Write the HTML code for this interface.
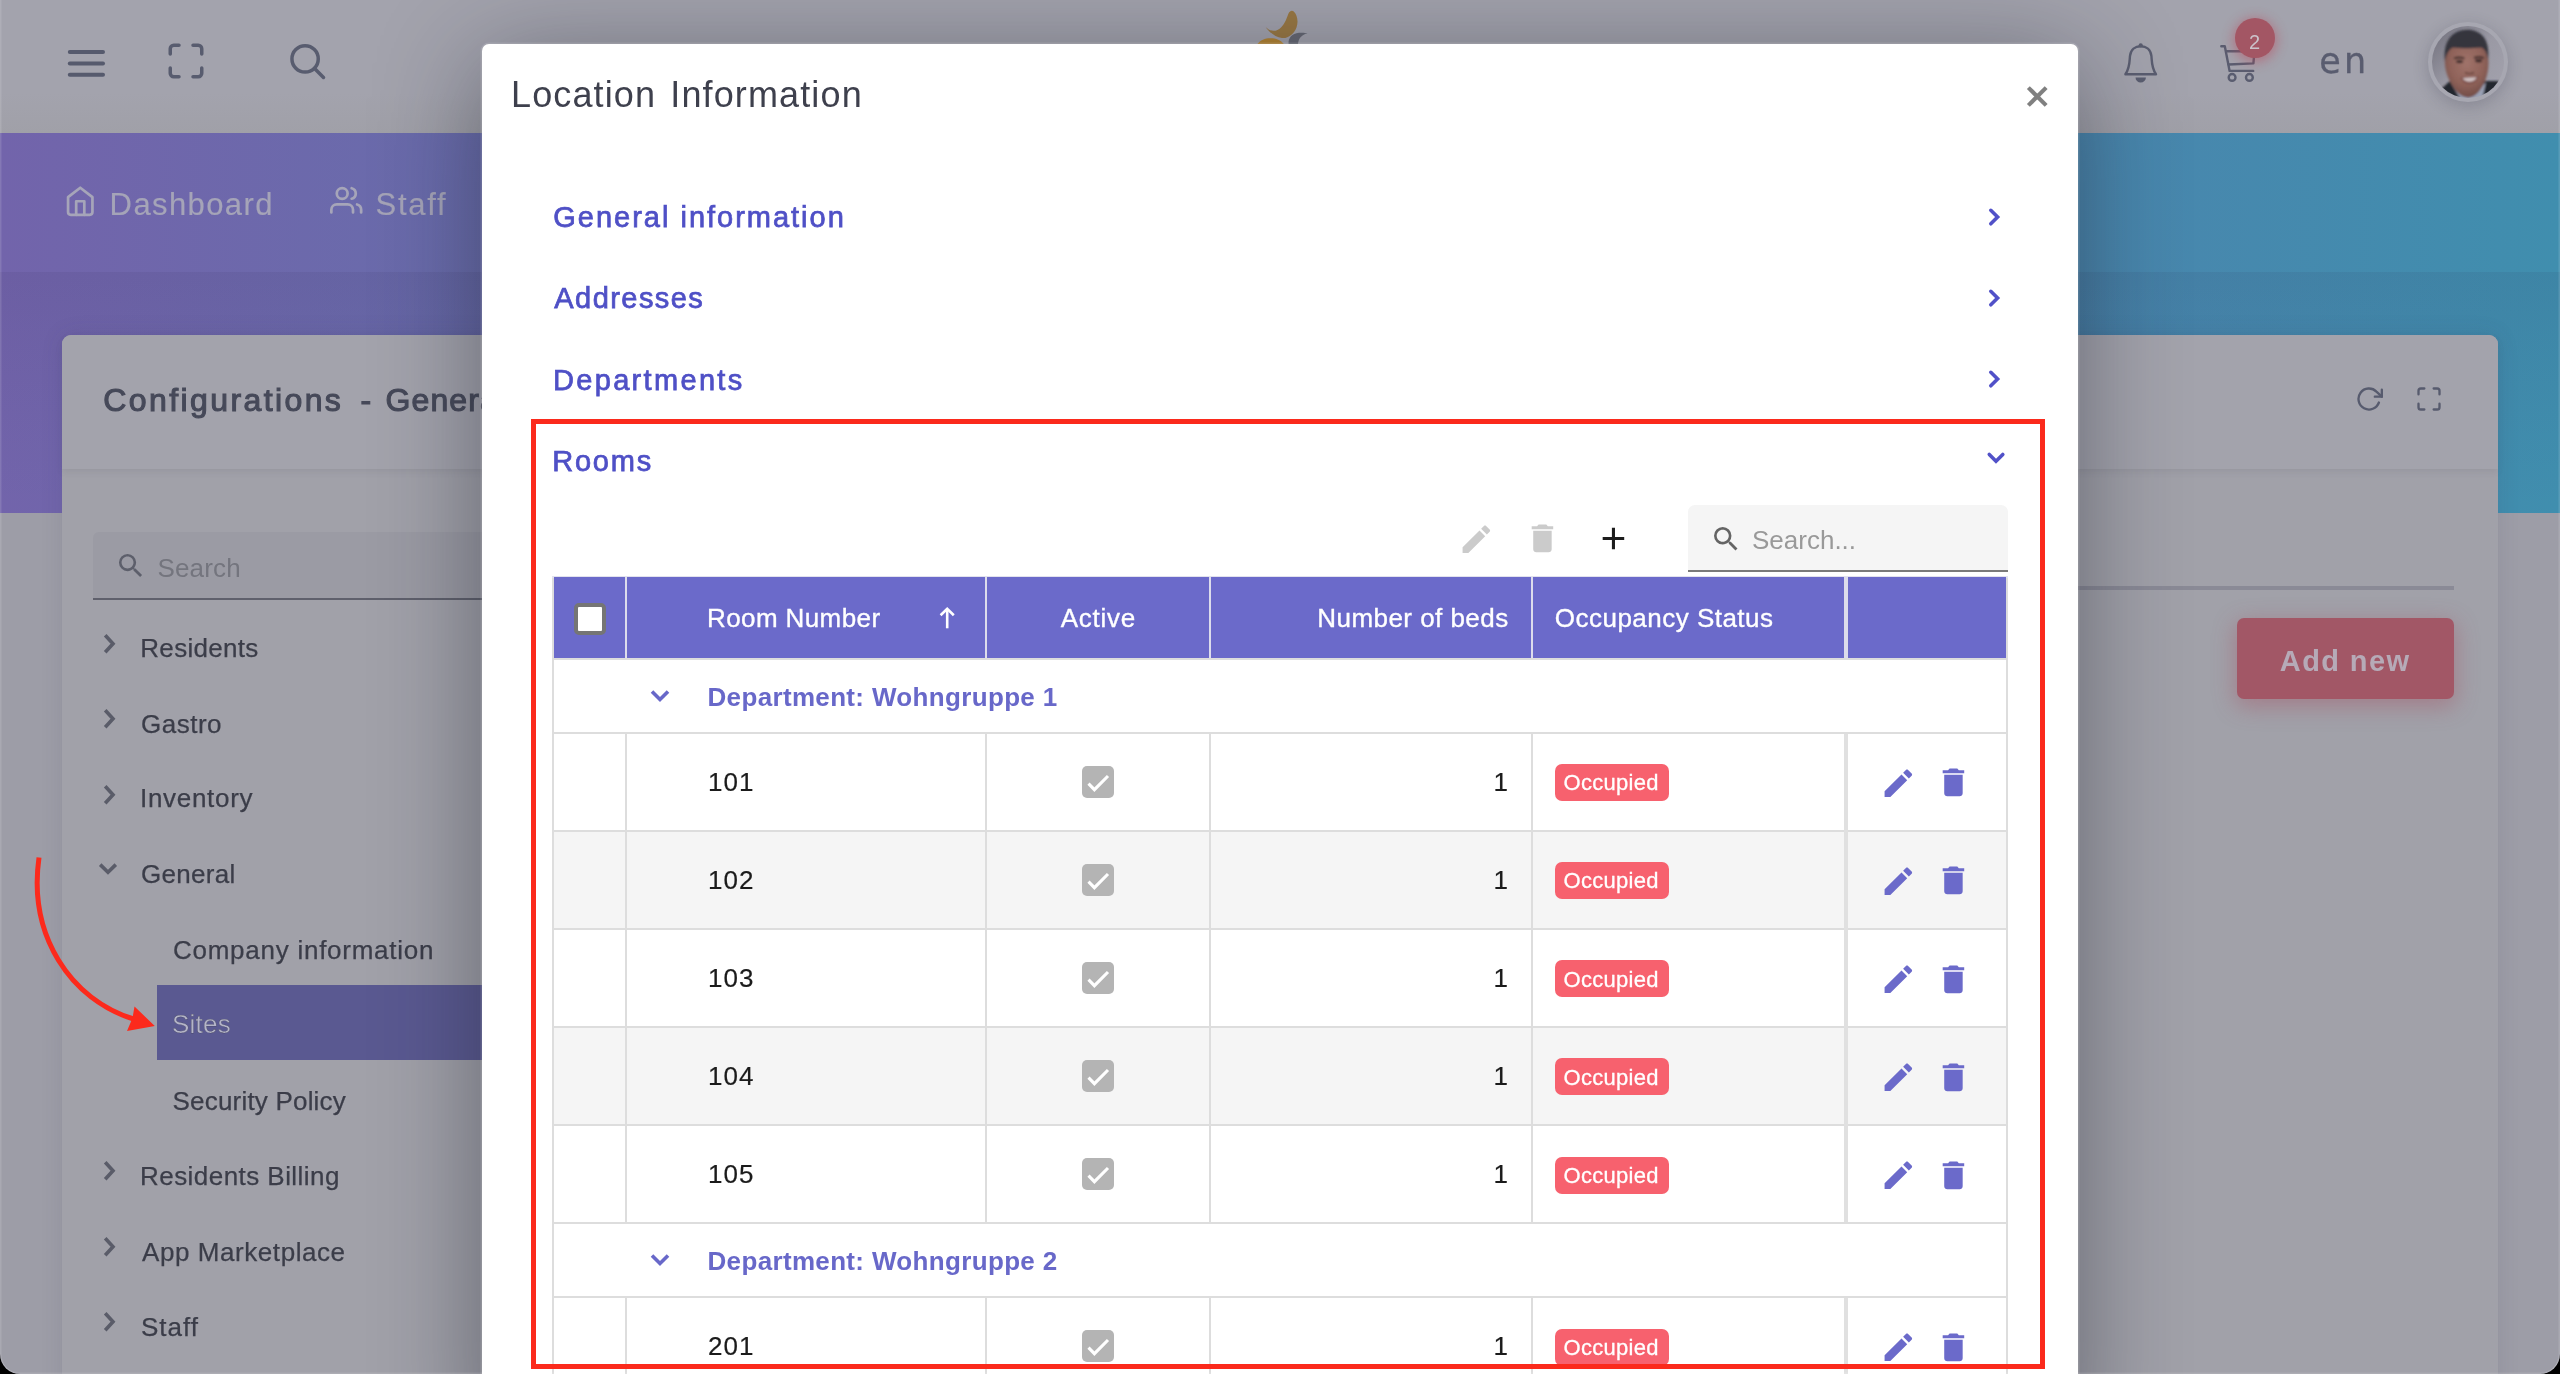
<!DOCTYPE html>
<html lang="en">
<head>
<meta charset="utf-8">
<title>Location Information</title>
<style>
*{box-sizing:border-box;margin:0;padding:0}
html,body{width:2560px;height:1374px;overflow:hidden;background:#000}
body{position:relative;font-family:"Liberation Sans",sans-serif;color:#3a3c48}
.abs{position:absolute}
.t{position:absolute;white-space:nowrap;line-height:1}
#page{will-change:transform;position:absolute;left:0;top:0;width:2560px;height:1374px;background:#9d9da7;overflow:hidden;border-radius:0 0 20px 20px}
/* header */
#hdr{left:0;top:0;width:2560px;height:133px;background:linear-gradient(#a3a3ad 0,#a3a3ad 70%,#a0a0a8 100%)}
#nav{left:0;top:133px;width:2560px;height:139px;background:linear-gradient(90deg,#7264ab 0%,#408eae 100%)}
#band{left:0;top:272px;width:2560px;height:240.800px;background:linear-gradient(180deg,rgba(30,20,60,.075) 0,rgba(30,20,60,.05) 25%,rgba(30,20,60,.015) 70%,rgba(30,20,60,0) 100%),linear-gradient(90deg,#7264ab 0%,#408eae 100%)}
#card{left:62px;top:335px;width:2436px;height:1100px;background:#a1a1a9;border-radius:9px;box-shadow:0 0 22px rgba(60,60,80,.12)}
#cardh{left:0;top:0;width:2436px;height:134px;background:#a3a3ac;border-radius:9px 9px 0 0;box-shadow:0 3px 6px rgba(70,70,90,.10)}
.navt{font-size:31px;color:#a5a4b8;letter-spacing:.6px;-webkit-text-stroke:.15px #a5a4b8}
.tree{font-size:26px;color:#3b3d49;-webkit-text-stroke:.25px #3b3d49}
/* modal */
#modal{left:482px;top:44px;width:1596px;height:1400px;background:#fff;border-radius:7px;box-shadow:0 0 0 1.5px rgba(255,255,255,.13),0 18px 105px 0 rgba(28,31,44,.47)}
.acc{font-size:29px;color:#4f50c6;-webkit-text-stroke:.75px #4f50c6}
#red{left:531.200px;top:419.300px;width:1513.700px;height:949.600px;border:5px solid #fb2a1c}
.cell{font-size:26px;color:#1b1b1b;letter-spacing:1px;-webkit-text-stroke:.2px #1b1b1b}
.badge{position:absolute;left:1555px;width:113.500px;height:37px;border-radius:7px;background:#f7616e}
.badge span{position:absolute;left:8.5px;top:8.2px;font-size:22px;letter-spacing:.3px;line-height:1;color:#fff;white-space:nowrap;-webkit-text-stroke:.3px #fff}
.chk{position:absolute;left:1082px;width:32px;height:32px;border-radius:5px;background:#b4b4b4}
</style>
</head>
<body>
<div id="page">
<div id="hdr" class="abs"></div>
<div id="nav" class="abs"></div>
<div id="band" class="abs"></div>
<div id="card" class="abs"><div id="cardh" class="abs"></div></div>

<!-- header icons -->
<svg class="abs" style="left:60px;top:40px" width="60" height="50" viewBox="0 0 60 50"><g stroke="#565a6d" stroke-width="4" stroke-linecap="round"><line x1="9.8" y1="12.1" x2="43" y2="12.1"/><line x1="9.8" y1="23.4" x2="43" y2="23.4"/><line x1="9.8" y1="34.7" x2="43" y2="34.7"/></g></svg>
<svg class="abs" style="left:164.6px;top:40.4px" width="42" height="42" viewBox="0 0 24 24" fill="none" stroke="#585c6f" stroke-width="2" stroke-linecap="round" stroke-linejoin="round"><path d="M8 3H5a2 2 0 0 0-2 2v3m18 0V5a2 2 0 0 0-2-2h-3m0 18h3a2 2 0 0 0 2-2v-3M3 16v3a2 2 0 0 0 2 2h3"/></svg>
<svg class="abs" style="left:280px;top:34px" width="56" height="56" viewBox="0 0 56 56" fill="none" stroke="#585c6f" stroke-width="3.5" stroke-linecap="round"><circle cx="25.1" cy="24.9" r="13.15"/><line x1="34.6" y1="34.4" x2="43.5" y2="43.4"/></svg>
<!-- nav -->
<svg class="abs" style="left:64px;top:184.6px" width="32.5" height="32.5" viewBox="0 0 24 24" fill="none" stroke="#a6a5b9" stroke-width="2" stroke-linecap="round" stroke-linejoin="round"><path d="M3 9l9-7 9 7v11a2 2 0 0 1-2 2H5a2 2 0 0 1-2-2z"/><polyline points="9 22 9 12 15 12 15 22"/></svg>
<span class="t navt" id="t_dash" style="left:109.6px;top:189px;letter-spacing:1.4px">Dashboard</span>
<svg class="abs" style="left:330px;top:184.4px" width="32.5" height="32.5" viewBox="0 0 24 24" fill="none" stroke="#a6a5b9" stroke-width="2" stroke-linecap="round" stroke-linejoin="round"><path d="M17 21v-2a4 4 0 0 0-4-4H5a4 4 0 0 0-4 4v2"/><circle cx="9" cy="7" r="4"/><path d="M23 21v-2a4 4 0 0 0-3-3.87"/><path d="M16 3.130a4 4 0 0 1 0 7.750"/></svg>
<span class="t navt" id="t_staffnav" style="left:375.6px;top:189px;letter-spacing:1.7px">Staff</span>
<!-- card title -->
<span class="t" id="t_conf1" style="left:103.3px;top:383.8px;font-size:32px;color:#464959;-webkit-text-stroke:1.1px #464959;letter-spacing:2.4px">Configurations</span><span class="t" id="t_conf2" style="left:360.5px;top:383.8px;font-size:32px;color:#464959;-webkit-text-stroke:1.1px #464959">-</span><span class="t" id="t_conf3" style="left:385.5px;top:383.8px;font-size:32px;color:#464959;-webkit-text-stroke:1.1px #464959;letter-spacing:1.1px">General</span>
<!-- sidebar search -->
<div class="abs" style="left:93px;top:532px;width:600px;height:67.500px;background:#9b9ba4;border-bottom:2.5px solid #5f606c;border-radius:6px 0 0 0"></div>
<svg class="abs" style="left:114.800px;top:549.800px" width="31.700" height="31.700" viewBox="0 0 24 24"><path fill="#5d5f6b" d="M15.5 14h-.79l-.28-.27A6.471 6.471 0 0 0 16 9.500 6.500 6.500 0 1 0 9.500 16c1.610 0 3.090-.59 4.230-1.570l.27.280v.79l5 4.990L20.490 19l-4.990-5zm-6 0C7.010 14 5 11.990 5 9.500S7.010 5 9.500 5 14 7.010 14 9.500 11.990 14 9.500 14z"/></svg>
<span class="t" id="t_srch" style="left:157.5px;top:554.5px;font-size:26px;color:#74757e;letter-spacing:0.15px">Search</span>
<svg class="abs" style="left:98px;top:629.7px" width="28" height="28" viewBox="0 0 28 28" fill="none" stroke="#5a5c69" stroke-width="3.6"><polyline points="7.200,5.300 15,13.800 7.200,22.300"/></svg>
<span class="t tree" id="t_tree0" style="left:140.3px;top:634.5px;letter-spacing:0.3px">Residents</span>
<svg class="abs" style="left:98px;top:705.2px" width="28" height="28" viewBox="0 0 28 28" fill="none" stroke="#5a5c69" stroke-width="3.6"><polyline points="7.200,5.300 15,13.800 7.200,22.300"/></svg>
<span class="t tree" id="t_tree1" style="left:141px;top:710.5px;letter-spacing:0.5px">Gastro</span>
<svg class="abs" style="left:98px;top:780.7px" width="28" height="28" viewBox="0 0 28 28" fill="none" stroke="#5a5c69" stroke-width="3.6"><polyline points="7.200,5.300 15,13.800 7.200,22.300"/></svg>
<span class="t tree" id="t_tree2" style="left:140px;top:785px;letter-spacing:0.7px">Inventory</span>
<svg class="abs" style="left:94px;top:856.2px" width="28" height="28" viewBox="0 0 28 28" fill="none" stroke="#5a5c69" stroke-width="3.6"><polyline points="6.2,8.600 14,16.200 21.800,8.600"/></svg>
<span class="t tree" id="t_tree3" style="left:141px;top:861px;letter-spacing:0.3px">General</span>
<svg class="abs" style="left:98px;top:1157.2px" width="28" height="28" viewBox="0 0 28 28" fill="none" stroke="#5a5c69" stroke-width="3.6"><polyline points="7.200,5.300 15,13.800 7.200,22.300"/></svg>
<span class="t tree" id="t_tree4" style="left:140px;top:1163px;letter-spacing:0.45px">Residents Billing</span>
<svg class="abs" style="left:98px;top:1232.7px" width="28" height="28" viewBox="0 0 28 28" fill="none" stroke="#5a5c69" stroke-width="3.6"><polyline points="7.200,5.300 15,13.800 7.200,22.300"/></svg>
<span class="t tree" id="t_tree5" style="left:142px;top:1238.5px;letter-spacing:0.57px">App Marketplace</span>
<svg class="abs" style="left:98px;top:1308.2px" width="28" height="28" viewBox="0 0 28 28" fill="none" stroke="#5a5c69" stroke-width="3.6"><polyline points="7.200,5.300 15,13.800 7.200,22.300"/></svg>
<span class="t tree" id="t_tree6" style="left:141px;top:1314px;letter-spacing:1px">Staff</span>
<span class="t tree" id="t_comp" style="left:173px;top:936.5px;letter-spacing:0.74px">Company information</span>
<div class="abs" style="left:157px;top:984.5px;width:400px;height:75px;background:#5a5991"></div>
<span class="t tree" id="t_sites" style="left:172px;top:1010.5px;color:#b4b4c9;letter-spacing:0.25px">Sites</span>
<span class="t tree" id="t_sec" style="left:172.5px;top:1088px;letter-spacing:0.2px">Security Policy</span>

<!-- right header -->
<svg class="abs" style="left:2120px;top:40px" width="44" height="46" viewBox="0 0 44 46"><path d="M5.4 34.2 C10.2 27.5 9.4 20.5 10 15.800 C10.800 9.6 15.2 6.3 20.7 6.3 C26.2 6.3 30.600 9.6 31.400 15.800 C32 20.5 31.200 27.5 36 34.2 Z" fill="none" stroke="#5a5d70" stroke-width="2.4" stroke-linejoin="round"/><circle cx="20.7" cy="5.3" r="2.1" fill="#5a5d70"/><path d="M15.5 37.4 A5.200 5.200 0 0 0 25.900 37.4 Z" fill="#5a5d70"/></svg>
<svg class="abs" style="left:2215px;top:40px" width="46" height="46" viewBox="0 0 46 46" fill="none" stroke="#5a5d70" stroke-width="2.4" stroke-linecap="round" stroke-linejoin="round"><path d="M6.3 6.2 L9.8 6.2 L14.6 30.900 L38.200 30.900"/><path d="M11.6 11.2 L39.5 11.2 L38.400 23.4 L13.6 24.500"/><circle cx="17.100" cy="37.4" r="3.4"/><circle cx="34.400" cy="37.4" r="3.4"/></svg>
<div class="abs" style="left:2234.8px;top:17.900px;width:40.400px;height:40.400px;border-radius:50%;background:#a35664;box-shadow:0 2px 12px 2px rgba(190,60,80,.45)"></div>
<span class="t" id="t_two" style="left:2249px;top:31.6px;font-size:20px;color:#cbc2ca">2</span>
<span class="t" id="t_en" style="left:2319.3px;top:43.7px;font-family:'DejaVu Sans','Liberation Sans',sans-serif;font-size:35px;color:#595c6f;letter-spacing:3.2px;-webkit-text-stroke:.3px #595c6f">en</span>
<!-- avatar -->
<div class="abs" style="left:2428.400px;top:22.200px;width:79.600px;height:79.600px;border-radius:50%;background:#a7a7b1;box-shadow:0 4px 16px rgba(40,40,60,.22)"></div>
<svg class="abs" style="left:2432px;top:26px" width="72" height="72" viewBox="0 0 72 72"><defs><clipPath id="avc"><circle cx="36" cy="36" r="36"/></clipPath><linearGradient id="avg" x1="0" y1="0" x2="1" y2="1"><stop offset="0" stop-color="#6f6e7a"/><stop offset=".5" stop-color="#9a99a4"/><stop offset="1" stop-color="#a4a3ae"/></linearGradient><radialGradient id="skin" cx=".5" cy=".38" r=".65"><stop offset="0" stop-color="#a0736a"/><stop offset=".6" stop-color="#8f6259"/><stop offset="1" stop-color="#6e4a45"/></radialGradient><filter id="avb" x="-10%" y="-10%" width="120%" height="120%"><feGaussianBlur stdDeviation="0.900"/></filter></defs><g clip-path="url(#avc)"><rect width="72" height="72" fill="url(#avg)"/><g filter="url(#avb)"><path d="M9 63 L18 55 L31 74 L4 74 Z" fill="#24262f"/><path d="M51 55 L67 55 L60 74 L44 74 Z" fill="#24262f"/><path d="M19 57 L29 74 L50 74 L54 56 L44 66 Z" fill="#9aa1b5"/><path d="M12.800 36 C12.500 26 18 16 35 16 C52 16 56.500 26 56.500 36 C56.500 46 54 56 48 64 C44 69.500 40 71.500 36 71.500 C31 71.500 26 68 22 62 C16 53 13 45 12.800 36 Z" fill="url(#skin)"/><path d="M13 35 C10.500 15 21 3.800 35 3.800 C49.500 3.800 58.500 14 56 34 C55 27 53 22.500 49 21.500 C40 22.500 28 22.500 21 21.500 C16.500 23.500 14.500 28 13 35 Z" fill="#34353e"/><path d="M22 32.500 Q27 30.500 32.500 32.500" stroke="#3d2c2c" stroke-width="1.800" fill="none"/><path d="M42 31.800 Q47 30 52 32.200" stroke="#3d2c2c" stroke-width="1.800" fill="none"/><ellipse cx="27.600" cy="35.600" rx="3.600" ry="1.700" fill="#3a2a2b"/><ellipse cx="46.600" cy="34.800" rx="3.600" ry="1.700" fill="#3a2a2b"/><path d="M33 46.500 Q37.500 49 42 46.500" stroke="#6c463f" stroke-width="1.600" fill="none"/><path d="M28.500 51.500 Q37.500 50.500 47 50 Q44 58 37 58 Q31 57.500 28.500 51.500 Z" fill="#7d4f4b"/><path d="M30.500 52.300 Q37.500 51.500 45 51.300 Q42 55.800 37.300 55.800 Q33 55.500 30.500 52.300 Z" fill="#cfc1c2"/></g></g></svg>
<!-- card right icons -->
<svg class="abs" style="left:2354.500px;top:384.500px" width="28" height="28" viewBox="0 0 24 24" fill="none" stroke="#575b6e" stroke-width="2" stroke-linecap="round" stroke-linejoin="round"><polyline points="23 4 23 10 17 10"/><path d="M20.490 15a9 9 0 1 1-2.120-9.360L23 10"/></svg>
<svg class="abs" style="left:2414.700px;top:384.700px" width="28" height="28" viewBox="0 0 24 24" fill="none" stroke="#575b6e" stroke-width="2" stroke-linecap="round" stroke-linejoin="round"><path d="M8 3H5a2 2 0 0 0-2 2v3m18 0V5a2 2 0 0 0-2-2h-3m0 18h3a2 2 0 0 0 2-2v-3M3 16v3a2 2 0 0 0 2 2h3"/></svg>
<div class="abs" style="left:700px;top:585.500px;width:1754px;height:4px;background:#8a8a96"></div>
<div class="abs" style="left:2237px;top:618px;width:217px;height:81px;border-radius:7px;background:#a25766;box-shadow:0 6px 22px 2px rgba(165,70,90,.38)"></div>
<span class="t" id="t_addnew" style="left:2279.8px;top:646.5px;font-size:29px;font-weight:bold;color:#b6aab7;letter-spacing:1.4px">Add new</span>

<svg class="abs" style="left:1250px;top:0" width="70" height="46" viewBox="0 0 70 46"><path d="M15.600 26.900 C20 31.500 26 32.500 31 27.500 C35.500 23 37 17 38.500 13.500 C39.800 10.700 42 10 43.800 11.500 C47.500 15 48.500 22 46.500 27.500 C44 34 38 38.800 32 38 C25 37 19 32 15.600 26.900 Z" fill="#9a7842"/><path d="M38.600 44 C38 38 42 33.500 49 32.800 C52.500 32.500 55.500 32.800 57.500 33.200 C52 34.500 48.500 38 48 44 Z" fill="#666873"/><path d="M7.500 44 C10 40 15 38.200 20.500 38.200 C26 38.200 31 40 33.800 44 Z" fill="#b5842f"/></svg>
<div id="modal" class="abs"></div>
<span class="t" id="t_title" style="left:511px;top:77px;font-size:36px;color:#3e404d;letter-spacing:1.13px;word-spacing:3px">Location Information</span>
<svg class="abs" style="left:2022px;top:81px" width="31" height="31" viewBox="0 0 31 31" stroke="#808080" stroke-width="4.100"><line x1="6.350" y1="6.600" x2="24.150" y2="24.400"/><line x1="24.150" y1="6.600" x2="6.350" y2="24.400"/></svg>
<span class="t acc" id="t_acc0" style="left:553.3px;top:203.2px;letter-spacing:1.99px">General information</span>
<span class="t acc" id="t_acc1" style="left:554.3px;top:284.4px;letter-spacing:1.44px">Addresses</span>
<span class="t acc" id="t_acc2" style="left:553px;top:365.5px;letter-spacing:2.32px">Departments</span>
<span class="t acc" id="t_acc3" style="left:552.3px;top:446.5px;letter-spacing:1.75px">Rooms</span>
<svg class="abs" style="left:1980px;top:202.5px" width="28" height="28" viewBox="0 0 28 28" fill="none" stroke="#5151c8" stroke-width="3.600" stroke-linecap="round"><polyline points="10.800,7.300 17.600,14 10.800,20.800"/></svg>
<svg class="abs" style="left:1980px;top:283.5px" width="28" height="28" viewBox="0 0 28 28" fill="none" stroke="#5151c8" stroke-width="3.600" stroke-linecap="round"><polyline points="10.800,7.300 17.600,14 10.800,20.800"/></svg>
<svg class="abs" style="left:1980px;top:364.5px" width="28" height="28" viewBox="0 0 28 28" fill="none" stroke="#5151c8" stroke-width="3.600" stroke-linecap="round"><polyline points="10.800,7.300 17.600,14 10.800,20.800"/></svg>
<svg class="abs" style="left:1981.500px;top:444px" width="28" height="28" viewBox="0 0 28 28" fill="none" stroke="#5151c8" stroke-width="3.600" stroke-linecap="round"><polyline points="7.300,10.400 14,17.200 20.800,10.400"/></svg>
<svg class="abs" style="left:1457.7px;top:520.7px" width="36.7" height="36.7" viewBox="0 0 24 24"><path fill="#cbcbcb" d="M3 17.25V21h3.75L17.810 9.940l-3.750-3.750L3 17.250zM20.710 7.040c.390-.390.390-1.020 0-1.410l-2.340-2.340c-.390-.390-1.020-.390-1.410 0l-1.830 1.830 3.750 3.750 1.830-1.830z"/></svg>
<svg class="abs" style="left:1523.5px;top:520.4px" width="36.9" height="36.9" viewBox="0 0 24 24"><path fill="#cbcbcb" d="M6 19c0 1.100.900 2 2 2h8c1.100 0 2-.900 2-2V7H6v12zM19 4h-3.500l-1-1h-5l-1 1H5v2h14V4z"/></svg>
<svg class="abs" style="left:1595.4px;top:520.4px" width="36.9" height="36.9" viewBox="0 0 24 24"><path fill="#1c1c1c" d="M19 13h-6v6h-2v-6H5v-2h6V5h2v6h6v2z"/></svg>
<div class="abs" style="left:1688px;top:505px;width:320px;height:66.500px;background:#f5f5f5;border-bottom:2.500px solid #7a7a7a;border-radius:7px 7px 0 0"></div>
<svg class="abs" style="left:1709.7px;top:522.9px" width="32.2" height="32.2" viewBox="0 0 24 24"><path fill="#646464" d="M15.500 14h-.790l-.280-.270A6.471 6.471 0 0 0 16 9.500 6.500 6.500 0 1 0 9.500 16c1.610 0 3.090-.590 4.230-1.570l.270.280v.790l5 4.990L20.490 19l-4.990-5zm-6 0C7.010 14 5 11.990 5 9.500S7.010 5 9.500 5 14 7.010 14 9.500 11.990 14 9.500 14z"/></svg>
<span class="t" id="t_srch2" style="left:1752px;top:526.5px;font-size:26px;color:#999">Search...</span>
<!--TBL-START-->
<div class="abs" style="left:552px;top:576px;width:2px;height:820px;background:#ddd"></div>
<div class="abs" style="left:2006px;top:576px;width:2px;height:820px;background:#ddd"></div>
<div class="abs" style="left:552px;top:576px;width:1456px;height:1.500px;background:#e2e2ee"></div>
<div class="abs" style="left:554px;top:577px;width:1452px;height:81.300px;background:#6b6aca"></div>
<div class="abs" style="left:554px;top:831.58px;width:1452px;height:96.08px;background:#f5f5f5"></div>
<div class="abs" style="left:554px;top:1027.74px;width:1452px;height:96.08px;background:#f5f5f5"></div>
<div class="abs" style="left:554px;top:658.3px;width:1452px;height:2px;background:#ddd"></div>
<div class="abs" style="left:554px;top:731.5px;width:1452px;height:2px;background:#ddd"></div>
<div class="abs" style="left:554px;top:829.58px;width:1452px;height:2px;background:#ddd"></div>
<div class="abs" style="left:554px;top:927.66px;width:1452px;height:2px;background:#ddd"></div>
<div class="abs" style="left:554px;top:1025.74px;width:1452px;height:2px;background:#ddd"></div>
<div class="abs" style="left:554px;top:1123.82px;width:1452px;height:2px;background:#ddd"></div>
<div class="abs" style="left:554px;top:1221.9px;width:1452px;height:2px;background:#ddd"></div>
<div class="abs" style="left:554px;top:1295.9px;width:1452px;height:2px;background:#ddd"></div>
<div class="abs" style="left:625px;top:577px;width:2px;height:81.3px;background:#dcdcec"></div>
<div class="abs" style="left:625px;top:733.5px;width:2px;height:488.4px;background:#ddd"></div>
<div class="abs" style="left:625px;top:1297.9px;width:2px;height:102.1px;background:#ddd"></div>
<div class="abs" style="left:985px;top:577px;width:2px;height:81.3px;background:#dcdcec"></div>
<div class="abs" style="left:985px;top:733.5px;width:2px;height:488.4px;background:#ddd"></div>
<div class="abs" style="left:985px;top:1297.9px;width:2px;height:102.1px;background:#ddd"></div>
<div class="abs" style="left:1208.8px;top:577px;width:2px;height:81.3px;background:#dcdcec"></div>
<div class="abs" style="left:1208.8px;top:733.5px;width:2px;height:488.4px;background:#ddd"></div>
<div class="abs" style="left:1208.8px;top:1297.9px;width:2px;height:102.1px;background:#ddd"></div>
<div class="abs" style="left:1530.9px;top:577px;width:2px;height:81.3px;background:#dcdcec"></div>
<div class="abs" style="left:1530.9px;top:733.5px;width:2px;height:488.4px;background:#ddd"></div>
<div class="abs" style="left:1530.9px;top:1297.9px;width:2px;height:102.1px;background:#ddd"></div>
<div class="abs" style="left:1844px;top:577px;width:3.800px;height:81.3px;background:#dcdcec"></div>
<div class="abs" style="left:1844px;top:733.5px;width:3.800px;height:488.4px;background:#e0e0e0"></div>
<div class="abs" style="left:1844px;top:1297.9px;width:3.800px;height:102.1px;background:#e0e0e0"></div>
<div class="abs" style="left:573.700px;top:602.500px;width:32px;height:32px;border:4px solid #757575;border-radius:5px;background:#fff"></div>
<span class="t" id="t_h1" style="left:707px;top:604.500px;font-size:26px;color:#fff;-webkit-text-stroke:.35px #fff;letter-spacing:.4px">Room Number</span>
<svg class="abs" style="left:935px;top:603px" width="24" height="30" viewBox="0 0 24 30" fill="none" stroke="#fff" stroke-width="2.600"><line x1="12.200" y1="6" x2="12.200" y2="25.300"/><polyline points="5.600,12.300 12.200,5.800 18.800,12.300"/></svg>
<span class="t" id="t_h2" style="left:1060.750px;top:604.500px;font-size:26px;color:#fff;-webkit-text-stroke:.35px #fff;letter-spacing:.75px">Active</span>
<span class="t" id="t_h3" style="left:1317.250px;top:604.500px;font-size:26px;color:#fff;-webkit-text-stroke:.35px #fff;letter-spacing:.46px">Number of beds</span>
<span class="t" id="t_h4" style="left:1554.800px;top:604.500px;font-size:26px;color:#fff;-webkit-text-stroke:.35px #fff;letter-spacing:.48px">Occupancy Status</span>
<svg class="abs" style="left:646px;top:681.8px" width="28" height="28" viewBox="0 0 28 28" fill="none" stroke="#6868c9" stroke-width="3.600"><polyline points="6,9.500 14,17.500 22,9.500"/></svg>
<span class="t" id="t_g1" style="left:707.500px;top:683.6px;font-size:26px;font-weight:bold;color:#6868c9;letter-spacing:.34px">Department: Wohngruppe 1</span>
<svg class="abs" style="left:646px;top:1246.3px" width="28" height="28" viewBox="0 0 28 28" fill="none" stroke="#6868c9" stroke-width="3.600"><polyline points="6,9.500 14,17.500 22,9.500"/></svg>
<span class="t" id="t_g2" style="left:707.500px;top:1248.1px;font-size:26px;font-weight:bold;color:#6868c9;letter-spacing:.34px">Department: Wohngruppe 2</span>
<span class="t cell" id="t_n0" style="left:708px;top:768.9px">101</span>
<div class="chk" style="top:766.0px"><svg width="32" height="32" viewBox="0 0 32 32" fill="none" stroke="#fff" stroke-width="3.100"><polyline points="6.500,17.700 12.400,23.700 26,10"/></svg></div>
<span class="t cell" id="t_b0" style="left:1493.5px;top:768.9px">1</span>
<div class="badge" style="top:764.2px"><span id="t_o0">Occupied</span></div>
<svg class="abs" style="left:1879.6px;top:764.6px" width="36.7" height="36.7" viewBox="0 0 24 24"><path fill="#6b6aca" d="M3 17.25V21h3.75L17.810 9.940l-3.750-3.750L3 17.250zM20.710 7.040c.390-.390.390-1.020 0-1.410l-2.340-2.340c-.390-.390-1.020-.390-1.410 0l-1.830 1.830 3.750 3.750 1.830-1.830z"/></svg>
<svg class="abs" style="left:1935.3px;top:764.3px" width="36.9" height="36.9" viewBox="0 0 24 24"><path fill="#6b6aca" d="M6 19c0 1.100.900 2 2 2h8c1.100 0 2-.900 2-2V7H6v12zM19 4h-3.500l-1-1h-5l-1 1H5v2h14V4z"/></svg>
<span class="t cell" id="t_n1" style="left:708px;top:867.0px">102</span>
<div class="chk" style="top:864.1px"><svg width="32" height="32" viewBox="0 0 32 32" fill="none" stroke="#fff" stroke-width="3.100"><polyline points="6.500,17.700 12.400,23.700 26,10"/></svg></div>
<span class="t cell" id="t_b1" style="left:1493.5px;top:867.0px">1</span>
<div class="badge" style="top:862.3px"><span id="t_o1">Occupied</span></div>
<svg class="abs" style="left:1879.6px;top:862.7px" width="36.7" height="36.7" viewBox="0 0 24 24"><path fill="#6b6aca" d="M3 17.25V21h3.75L17.810 9.940l-3.750-3.750L3 17.250zM20.710 7.040c.390-.390.390-1.020 0-1.410l-2.340-2.340c-.390-.390-1.020-.390-1.410 0l-1.830 1.830 3.750 3.750 1.830-1.830z"/></svg>
<svg class="abs" style="left:1935.3px;top:862.4px" width="36.9" height="36.9" viewBox="0 0 24 24"><path fill="#6b6aca" d="M6 19c0 1.100.900 2 2 2h8c1.100 0 2-.900 2-2V7H6v12zM19 4h-3.500l-1-1h-5l-1 1H5v2h14V4z"/></svg>
<span class="t cell" id="t_n2" style="left:708px;top:965.1px">103</span>
<div class="chk" style="top:962.2px"><svg width="32" height="32" viewBox="0 0 32 32" fill="none" stroke="#fff" stroke-width="3.100"><polyline points="6.500,17.700 12.400,23.700 26,10"/></svg></div>
<span class="t cell" id="t_b2" style="left:1493.5px;top:965.1px">1</span>
<div class="badge" style="top:960.4px"><span id="t_o2">Occupied</span></div>
<svg class="abs" style="left:1879.6px;top:960.8px" width="36.7" height="36.7" viewBox="0 0 24 24"><path fill="#6b6aca" d="M3 17.25V21h3.75L17.810 9.940l-3.750-3.750L3 17.250zM20.710 7.040c.390-.390.390-1.020 0-1.410l-2.340-2.340c-.390-.390-1.020-.390-1.410 0l-1.830 1.830 3.750 3.750 1.830-1.830z"/></svg>
<svg class="abs" style="left:1935.3px;top:960.5px" width="36.9" height="36.9" viewBox="0 0 24 24"><path fill="#6b6aca" d="M6 19c0 1.100.900 2 2 2h8c1.100 0 2-.900 2-2V7H6v12zM19 4h-3.500l-1-1h-5l-1 1H5v2h14V4z"/></svg>
<span class="t cell" id="t_n3" style="left:708px;top:1063.1px">104</span>
<div class="chk" style="top:1060.2px"><svg width="32" height="32" viewBox="0 0 32 32" fill="none" stroke="#fff" stroke-width="3.100"><polyline points="6.500,17.700 12.400,23.700 26,10"/></svg></div>
<span class="t cell" id="t_b3" style="left:1493.5px;top:1063.1px">1</span>
<div class="badge" style="top:1058.4px"><span id="t_o3">Occupied</span></div>
<svg class="abs" style="left:1879.6px;top:1058.8px" width="36.7" height="36.7" viewBox="0 0 24 24"><path fill="#6b6aca" d="M3 17.25V21h3.75L17.810 9.940l-3.750-3.750L3 17.250zM20.710 7.040c.390-.390.390-1.020 0-1.410l-2.340-2.340c-.390-.390-1.020-.390-1.410 0l-1.830 1.830 3.750 3.750 1.830-1.830z"/></svg>
<svg class="abs" style="left:1935.3px;top:1058.5px" width="36.9" height="36.9" viewBox="0 0 24 24"><path fill="#6b6aca" d="M6 19c0 1.100.900 2 2 2h8c1.100 0 2-.900 2-2V7H6v12zM19 4h-3.500l-1-1h-5l-1 1H5v2h14V4z"/></svg>
<span class="t cell" id="t_n4" style="left:708px;top:1161.2px">105</span>
<div class="chk" style="top:1158.3px"><svg width="32" height="32" viewBox="0 0 32 32" fill="none" stroke="#fff" stroke-width="3.100"><polyline points="6.500,17.700 12.400,23.700 26,10"/></svg></div>
<span class="t cell" id="t_b4" style="left:1493.5px;top:1161.2px">1</span>
<div class="badge" style="top:1156.5px"><span id="t_o4">Occupied</span></div>
<svg class="abs" style="left:1879.6px;top:1156.9px" width="36.7" height="36.7" viewBox="0 0 24 24"><path fill="#6b6aca" d="M3 17.25V21h3.75L17.810 9.940l-3.750-3.750L3 17.250zM20.710 7.040c.390-.390.390-1.020 0-1.410l-2.340-2.340c-.390-.390-1.020-.390-1.410 0l-1.830 1.830 3.750 3.750 1.830-1.830z"/></svg>
<svg class="abs" style="left:1935.3px;top:1156.6px" width="36.9" height="36.9" viewBox="0 0 24 24"><path fill="#6b6aca" d="M6 19c0 1.100.900 2 2 2h8c1.100 0 2-.900 2-2V7H6v12zM19 4h-3.500l-1-1h-5l-1 1H5v2h14V4z"/></svg>
<span class="t cell" id="t_n5" style="left:708px;top:1333.3px">201</span>
<div class="chk" style="top:1330.4px"><svg width="32" height="32" viewBox="0 0 32 32" fill="none" stroke="#fff" stroke-width="3.100"><polyline points="6.500,17.700 12.400,23.700 26,10"/></svg></div>
<span class="t cell" id="t_b5" style="left:1493.5px;top:1333.3px">1</span>
<div class="badge" style="top:1328.6px"><span id="t_o5">Occupied</span></div>
<svg class="abs" style="left:1879.6px;top:1329.0px" width="36.7" height="36.7" viewBox="0 0 24 24"><path fill="#6b6aca" d="M3 17.25V21h3.75L17.810 9.940l-3.750-3.750L3 17.250zM20.710 7.040c.390-.390.390-1.020 0-1.410l-2.340-2.340c-.390-.390-1.020-.390-1.410 0l-1.830 1.830 3.750 3.750 1.830-1.830z"/></svg>
<svg class="abs" style="left:1935.3px;top:1328.7px" width="36.9" height="36.9" viewBox="0 0 24 24"><path fill="#6b6aca" d="M6 19c0 1.100.900 2 2 2h8c1.100 0 2-.900 2-2V7H6v12zM19 4h-3.500l-1-1h-5l-1 1H5v2h14V4z"/></svg>
<!--TBL-END-->
<div id="red" class="abs"></div>
<svg class="abs" style="left:0;top:840px" width="200" height="220" viewBox="0 840 200 220"><path d="M39 857.500 C28 935 70 1000 135 1019.500" fill="none" stroke="#fc2a1c" stroke-width="5"/><path d="M154.800 1026 L134.500 1006.500 L132.500 1018 L127 1031 Z" fill="#fc2a1c"/></svg>

<div class="abs" style="left:0;top:0;width:2560px;height:1374px;border-radius:0 0 20px 20px;box-shadow:inset 1.500px 0 0 rgba(255,255,255,.13),inset -1.500px 0 0 rgba(255,255,255,.13),inset 0 -1.500px 0 rgba(255,255,255,.13);pointer-events:none"></div>
</div>
<script>(function(){var w=window.innerWidth||0;if(w>200&&Math.abs(w-2560)>2){var z=w/2560;var h=document.documentElement;h.style.width=w+"px";h.style.height=Math.round(1374*z)+"px";document.body.style.zoom=z;}})();</script>
</body>
</html>
